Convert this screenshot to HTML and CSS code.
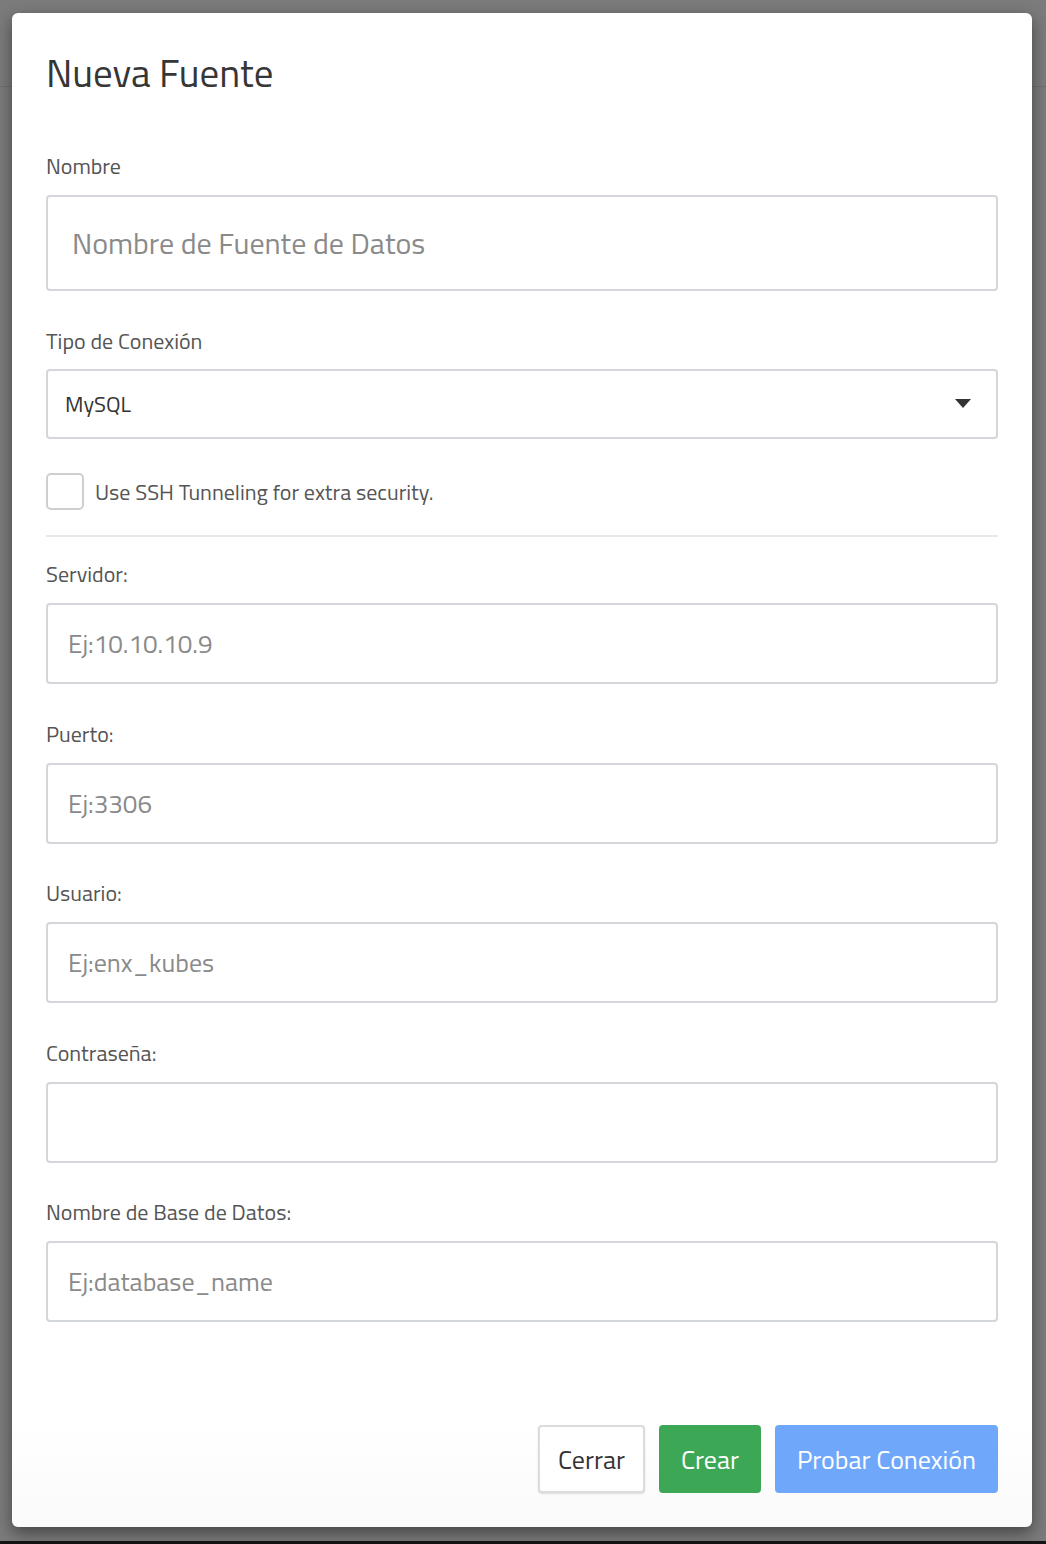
FILE: index.html
```html
<!DOCTYPE html>
<html lang="es">
<head>
    <meta charset="UTF-8">
    <meta name="viewport" content="width=device-width, initial-scale=1.0">
    <title>Nueva Fuente</title>
    <link rel="stylesheet" href="styles.css">
</head>
<body>
    <div class="modal">
        <h2 class="modal-title">Nueva Fuente</h2>

        <div class="form-group">
            <label class="form-label">Nombre</label>
            <input class="form-input big" type="text" placeholder="Nombre de Fuente de Datos">
        </div>

        <div class="form-group">
            <label class="form-label">Tipo de Conexión</label>
            <div class="form-select">
                <span>MySQL</span>
                <svg class="caret" width="16" height="9" viewBox="0 0 16 9"><path d="M0 0h16L8 9z" fill="#333"/></svg>
            </div>
        </div>

        <label class="check-row">
            <input class="check-box" type="checkbox">
            <span>Use SSH Tunneling for extra security.</span>
        </label>

        <hr class="divider">

        <div class="form-group">
            <label class="form-label">Servidor:</label>
            <input class="form-input" type="text" placeholder="Ej:10.10.10.9">
        </div>

        <div class="form-group">
            <label class="form-label">Puerto:</label>
            <input class="form-input" type="text" placeholder="Ej:3306">
        </div>

        <div class="form-group">
            <label class="form-label">Usuario:</label>
            <input class="form-input" type="text" placeholder="Ej:enx_kubes">
        </div>

        <div class="form-group">
            <label class="form-label">Contraseña:</label>
            <input class="form-input" type="password">
        </div>

        <div class="form-group">
            <label class="form-label">Nombre de Base de Datos:</label>
            <input class="form-input" type="text" placeholder="Ej:database_name">
        </div>

        <div class="modal-footer">
            <button class="btn btn-light">Cerrar</button>
            <button class="btn btn-green">Crear</button>
            <button class="btn btn-blue">Probar Conexión</button>
        </div>
    </div>
</body>
</html>
```

FILE: styles.css
```css
* {
    margin: 0;
    padding: 0;
    box-sizing: border-box;
}

body {
    font-family: "Titillium Web", Lato, "Open Sans", sans-serif;
    min-height: 1544px;
    background:
        linear-gradient(#141414, #141414) bottom / 100% 3px no-repeat,
        linear-gradient(#6f6f6f, #6f6f6f) 0 86px / 100% 1px no-repeat,
        #7b7b7b;
    padding-top: 13px;
    overflow: hidden;
}

.modal {
    width: 1020px;
    height: 1514px;
    margin-left: 12px;
    background: linear-gradient(#fff 93%, #fafafa);
    border-radius: 6px;
    box-shadow: 0 6px 16px rgba(0, 0, 0, 0.45);
    padding: 38px 34px 34px;
    display: flex;
    flex-direction: column;
}

.modal-title {
    font-size: 39px;
    font-weight: 400;
    line-height: 44px;
    color: #363636;
    margin-bottom: 59px;
}

.form-group {
    margin-bottom: 37.5px;
}

.form-label {
    display: block;
    font-size: 22px;
    line-height: 24px;
    color: #555;
    margin-bottom: 17px;
}

.form-input {
    display: block;
    width: 100%;
    height: 81px;
    border: 2px solid #d3d6db;
    border-radius: 4px;
    padding: 0 20px;
    font-family: inherit;
    font-size: 26px;
    color: #333;
    outline: none;
}

.form-input.big {
    height: 96px;
    padding: 0 24px;
    font-size: 30px;
}

.form-input::placeholder {
    color: #8a8a8a;
    opacity: 1;
}

.form-select {
    height: 70px;
    margin-top: -1px;
    border: 2px solid #d3d6db;
    border-radius: 4px;
    padding: 0 25px 0 17px;
    display: flex;
    align-items: center;
    justify-content: space-between;
    font-size: 22px;
    color: #333;
}

.check-row {
    display: flex;
    align-items: center;
    gap: 11px;
    font-size: 22px;
    color: #555;
    margin-top: -3px;
}

.check-box {
    appearance: none;
    width: 38px;
    height: 37px;
    border: 2px solid #cfcfcf;
    border-radius: 5px;
    background: #fff;
}

.divider {
    border: none;
    border-top: 2px solid #e8e8e8;
    margin: 25px 0 25px;
}

.modal-footer {
    margin-top: auto;
    display: flex;
    justify-content: flex-end;
    gap: 14px;
}

.btn {
    height: 68px;
    padding: 0 22px;
    border-radius: 4px;
    border: none;
    font-family: inherit;
    font-size: 26px;
    cursor: pointer;
}

.btn-light {
    background: #fff;
    color: #333;
    padding: 0 18px;
    border: 2px solid #dcdcdc;
    box-shadow: 0 1px 2px rgba(0, 0, 0, 0.12);
}

.btn-green {
    background: #3ca755;
    color: #fff;
}

.btn-blue {
    background: #6fa8fb;
    color: #fff;
}
```
